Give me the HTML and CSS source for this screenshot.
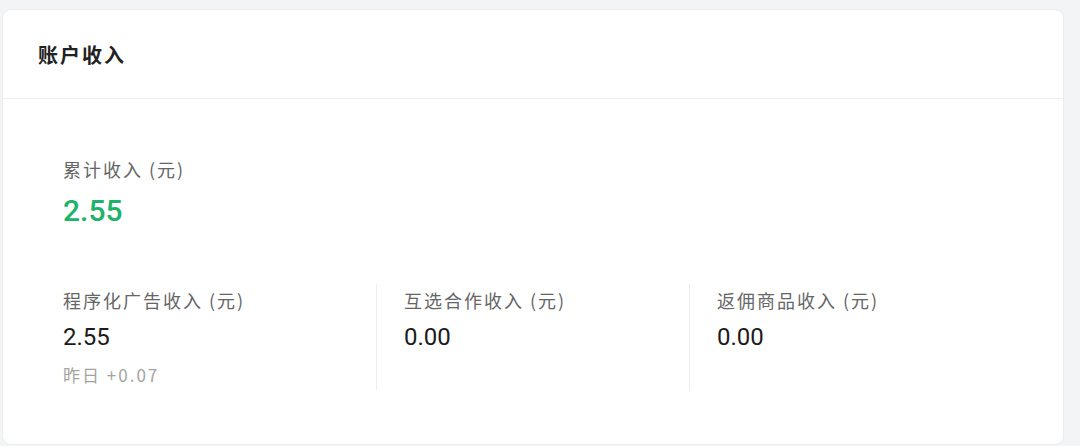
FILE: index.html
```html
<!DOCTYPE html>
<html lang="zh">
<head>
<meta charset="utf-8">
<link rel="stylesheet" href="styles.css">
</head>
<body>
<div class="card">
  <div class="card-head">账户收入</div>
  <div class="card-body">
    <div class="total">
      <div class="label">累计收入 (元)</div>
      <div class="total-value">2.55</div>
    </div>
    <div class="cols">
      <div class="col">
        <div class="label">程序化广告收入 (元)</div>
        <div class="value">2.55</div>
        <div class="sub">昨日 +0.07</div>
      </div>
      <div class="col">
        <div class="label">互选合作收入 (元)</div>
        <div class="value">0.00</div>
      </div>
      <div class="col">
        <div class="label">返佣商品收入 (元)</div>
        <div class="value">0.00</div>
      </div>
    </div>
  </div>
</div>
</body>
</html>
```
FILE: styles.css
```css
html, body {
  margin: 0;
  padding: 0;
}
body {
  background: #f3f4f5;
  font-family: "Noto Sans CJK SC", "Noto Sans", sans-serif;
  width: 1080px;
  height: 446px;
  overflow: hidden;
  padding: 9px 16px 0 2px;
  box-sizing: border-box;
}
.card {
  background: #fff;
  border-radius: 9px;
  height: 436px;
  border: 1px solid #eceded;
  box-sizing: border-box;
}
.card-head {
  height: 89px;
  border-bottom: 1px solid #eeeeee;
  display: flex;
  align-items: center;
  padding-left: 35px;
  font-size: 20px;
  letter-spacing: 2px;
  font-weight: 600;
  color: #222;
  box-sizing: border-box;
}
.card-body {
  padding: 58px 0 0 60px;
}
.label {
  font-size: 18px;
  letter-spacing: 2px;
  line-height: 24px;
  color: #666;
}
.total-value {
  font-family: Roboto, "Noto Sans", sans-serif;
  font-size: 30px;
  line-height: 40px;
  margin-top: 10px;
  color: #1fb26b;
  font-weight: 500;
}
.cols {
  display: flex;
  margin-top: 53px;
}
.col {
  width: 313px;
  height: 106px;
  box-sizing: border-box;
  padding-top: 4px;
}
.col + .col {
  border-left: 1px solid #eeeeee;
  padding-left: 27px;
}
.value {
  font-family: Roboto, "Noto Sans", sans-serif;
  font-size: 24px;
  line-height: 30px;
  margin-top: 10px;
  color: #1b1b1b;
}
.sub {
  font-size: 17px;
  letter-spacing: 2px;
  line-height: 24px;
  margin-top: 11px;
  color: #a3a3a3;
}
```
